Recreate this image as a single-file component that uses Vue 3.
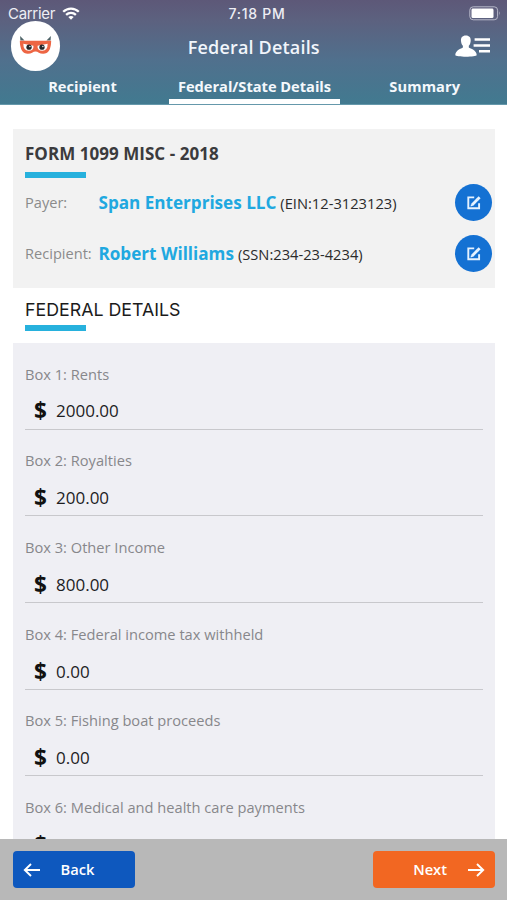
<script setup>
const tabs = [
  { label: 'Recipient', cls: 'tab-recipient' },
  { label: 'Federal/State Details', cls: 'tab-details', active: true },
  { label: 'Summary', cls: 'tab-summary' },
]
const parties = [
  { role: 'Payer:', name: 'Span Enterprises LLC', id: '(EIN:12-3123123)' },
  { role: 'Recipient:', name: 'Robert Williams', id: '(SSN:234-23-4234)' },
]
const boxes = [
  { label: 'Box 1: Rents', value: '2000.00' },
  { label: 'Box 2: Royalties', value: '200.00' },
  { label: 'Box 3: Other Income', value: '800.00' },
  { label: 'Box 4: Federal income tax withheld', value: '0.00' },
  { label: 'Box 5: Fishing boat proceeds', value: '0.00' },
  { label: 'Box 6: Medical and health care payments', value: '0.00' },
]
</script>

<template>
  <div class="screen">
    <header class="header">
      <div class="status">
        <div class="carrier">
          <span>Carrier</span>
          <svg class="wifi" width="18" height="13" viewBox="0 0 18 13" fill="none" stroke="#fff" stroke-width="2.3">
            <path d="M1.2 4.8C5.6.5 12.4.5 16.8 4.8" />
            <path d="M4.1 7.9C6.9 5.2 11.1 5.2 13.9 7.9" />
            <path d="M9 12.7 6.3 9.9Q9 7.9 11.7 9.9Z" fill="#fff" stroke="none" />
          </svg>
        </div>
        <span class="clock">7:18 PM</span>
        <svg class="battery" width="32" height="15" viewBox="0 0 32 15">
          <rect x=".8" y=".8" width="27.8" height="13" rx="3.4" fill="none" stroke="#b7b8c9" stroke-width="1" />
          <rect x="2.5" y="2.5" width="22" height="9.6" rx="1.4" fill="#fff" />
          <path d="M30 5.2Q31.6 7.3 30 9.4Z" fill="#b7b8c9" />
        </svg>
      </div>
      <div class="title-row">
        <div class="logo">
          <svg width="49" height="49" viewBox="0 0 50 50">
            <path d="M9.3 15.3 13.8 20H9.6ZM40.7 15.3 36.2 20H40.4Z" fill="#4e6468" />
            <path d="M9 20.2H41Q40.8 33.5 32.8 33.5C29 33.5 27.5 31.2 25 31.2S21 33.5 17.2 33.5Q9.2 33.5 9 20.2Z" fill="#ed6543" />
            <path d="M12.6 23.3 22.9 25.2Q23.4 30.4 18 30.4Q12.5 30.4 12.6 23.3ZM37.4 23.3 27.1 25.2Q26.6 30.4 32 30.4Q37.5 30.4 37.4 23.3Z" fill="#fff" />
            <circle cx="18.4" cy="26.7" r="2.7" fill="#25272a" />
            <circle cx="31.6" cy="26.7" r="2.7" fill="#25272a" />
            <circle cx="19.3" cy="26" r=".7" fill="#fff" />
            <circle cx="32.5" cy="26" r=".7" fill="#fff" />
          </svg>
        </div>
        <h1>Federal Details</h1>
        <svg class="contact" width="36" height="23" viewBox="0 0 36 23" fill="#fff">
          <path d="M10.8.5C14.4.5 16 2.8 15.7 6C15.5 8.4 14.8 9.7 13.8 10.8V12.5C15.6 13.8 21.5 15 21.7 20C21.7 22.3 .3 22.3 .3 20C.5 15 6.2 13.8 7.9 12.5V10.8C6.9 9.7 6.2 8.4 6 6C5.7 2.8 7.3.5 10.8.5Z" />
          <path d="M19.6 3.2H35v2.6H19.6ZM18.6 9.2H35v2.6H18.6ZM24 15H35v2.6H24Z" />
        </svg>
      </div>
      <nav class="tabs">
        <div v-for="t in tabs" :key="t.label" class="tab" :class="[t.cls, { active: t.active }]"><span>{{ t.label }}</span></div>
      </nav>
    </header>

    <main class="content">
      <section class="form-card">
        <h2>FORM 1099 MISC - 2018</h2>
        <div class="accent"></div>
        <div v-for="p in parties" :key="p.role" class="party">
          <span class="role">{{ p.role }}</span>
          <span class="name">{{ p.name }}</span>
          <span class="tax-id">{{ p.id }}</span>
          <button class="edit" :aria-label="'Edit ' + p.name">
            <svg width="14" height="14" viewBox="0 0 14 14" fill="none" stroke="#e5f2ff">
              <path d="M7.2 1.4H1.3V12.2H12.1V7.3" stroke-width="1.9" />
              <path d="M5 8.9 10.6 3.3" stroke-width="2.8" />
              <path d="M10.4 3.5 12.6 1.3" stroke-width="2.8" />
              <path d="M3.5 10.5 4 7.9 6.1 9.8Z" fill="#e5f2ff" stroke="none" />
            </svg>
          </button>
        </div>
      </section>

      <div class="section-head">
        <h3>FEDERAL DETAILS</h3>
        <div class="accent"></div>
      </div>

      <section class="boxes">
        <div v-for="b in boxes" :key="b.label" class="box">
          <div class="box-label">{{ b.label }}</div>
          <div class="amount"><span class="dollar">$</span><span class="value">{{ b.value }}</span></div>
        </div>
      </section>
    </main>

    <footer class="footer">
      <button class="btn back">
        <svg width="18" height="14" viewBox="0 0 18 14" fill="none" stroke="#fff" stroke-width="1.9"><path d="M17 7H1.8M8 1 1.8 7 8 13" /></svg>
        <span>Back</span>
      </button>
      <button class="btn next">
        <span>Next</span>
        <svg width="18" height="14" viewBox="0 0 18 14" fill="none" stroke="#fff" stroke-width="1.9"><path d="M1 7H16.2M10 1 16.2 7 10 13" /></svg>
      </button>
    </footer>
  </div>
</template>

<style>
body { margin: 0; background: #fff; }
</style>

<style scoped>
* { box-sizing: border-box; }
.screen { width: 507px; height: 900px; display: flex; flex-direction: column; overflow: hidden; background: #fff; font-family: "Open Sans", sans-serif; color: #1d1d1f; }
h1, h2, h3 { margin: 0; }
button { border: 0; padding: 0; font-family: inherit; }
svg { display: block; flex: none; }
.header { height: 105px; flex: none; color: #fff; background: linear-gradient(#5d5878 0, #5c617f 20px, #50708d 60px, #417a90 105px); border-bottom: 1px solid #6598ab; }
.status { height: 21px; display: grid; grid-template-columns: 1fr auto 1fr; padding: 6px 6px 0 8px; font: 15px/16px Inter, sans-serif; color: #eeeef4; }
.carrier { display: flex; gap: 7px; letter-spacing: -.3px; }
.wifi { margin-top: 1px; }
.clock { font-size: 14px; font-weight: 500; letter-spacing: .75px; padding-left: 5px; }
.battery { justify-self: end; }
.title-row { height: 50px; display: grid; grid-template-columns: 1fr auto 1fr; align-items: center; padding: 0 16px 0 10.5px; }
.logo { width: 49.5px; height: 49.5px; border-radius: 50%; background: #fff; }
h1 { font-size: 18px; font-weight: 600; line-height: 24px; letter-spacing: .18px; color: #f1f5fb; padding: 1px 0 0 6px; }
.contact { justify-self: end; }
.tabs { display: flex; height: 33px; }
.tab { display: flex; justify-content: center; font-size: 14.65px; font-weight: 700; line-height: 31px; border-bottom: 5px solid transparent; color: #f4f8fc; }
.tab-recipient { width: 165px; margin-right: 3.5px; }
.tab-details { width: 171px; padding-left: 1px; letter-spacing: -.02px; }
.tab-summary { width: 167.5px; padding-left: 3px; letter-spacing: .08px; flex: 1; }
.active { border-color: #fff; }
.content { flex: 1; min-height: 0; overflow: hidden; padding: 24px 12px 0 13px; }
.form-card { height: 159px; padding: 14px 3px 0 12px; background: #f2f2f2; }
h2 { font-size: 17px; font-weight: 700; line-height: 22px; color: #3b3b3d; letter-spacing: .04px; }
.accent { width: 61px; height: 6px; background: #27b1dd; }
.form-card .accent { margin-top: 7px; margin-bottom: 6px; }
.party { display: flex; align-items: center; height: 37px; margin-bottom: 14px; }
.role { width: 73.5px; margin-top: -2px; font-size: 14.6px; color: #8b8b8b; }
.name { font-size: 17.1px; font-weight: 700; color: #20a8e0; }
.tax-id { margin-left: 4px; font-size: 14.7px; color: #2b2b2b; }
.edit { display: grid; place-items: center; margin-left: auto; width: 37px; height: 37px; border-radius: 50%; background: #1471d3; }
.section-head { height: 55px; padding: 10px 12px 0; }
h3 { font: 400 17.8px/23px Inter, sans-serif; color: #1b1b1b; }
.section-head .accent { margin-top: 4px; }
.boxes { background: #efeff4; padding: 0 12px; }
.box { height: 86.7px; padding-top: 19.6px; border-bottom: 1.5px solid #c8c8cc; }
.box-label { font-size: 14.65px; line-height: 22px; color: #87878b; }
.amount { display: flex; align-items: center; height: 28px; margin-top: 12.9px; padding-left: 9px; }
.dollar { width: 22px; font-size: 22.5px; font-weight: 700; line-height: 28px; color: #111; }
.value { font-size: 17px; line-height: 28px; }
.footer { flex: none; height: 61px; display: flex; justify-content: space-between; padding: 12px 12px 0 13px; background: #b8b8b8; }
.btn { display: flex; align-items: center; width: 122px; height: 37px; border-radius: 4px; color: #fff; font-size: 14.7px; font-weight: 600; }
.btn span { margin-top: -2px; }
.back { background: #0e58be; padding-left: 10px; gap: 19.5px; }
.next { background: #f26722; justify-content: flex-end; padding-right: 10px; gap: 20px; }
</style>
